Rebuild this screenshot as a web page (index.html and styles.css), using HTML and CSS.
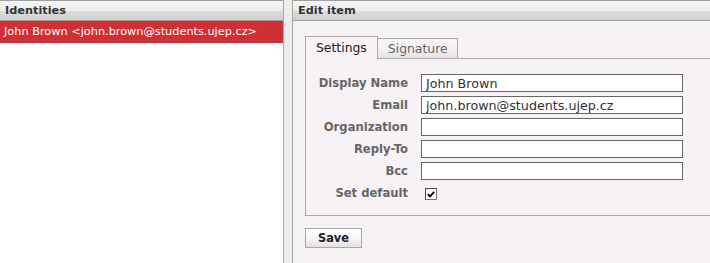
FILE: index.html
```html
<!DOCTYPE html>
<html lang="en">
<head>
    <meta charset="UTF-8">
    <meta name="viewport" content="width=device-width, initial-scale=1.0">
    <title>Identities</title>
    <link rel="stylesheet" href="styles.css">
</head>
<body>
    <div class="layout">
        <div class="panel panel-list">
            <div class="panel-header">Identities</div>
            <div class="identity-row selected">John Brown &lt;john.brown@students.ujep.cz&gt;</div>
        </div>

        <div class="panel panel-edit">
            <div class="panel-header">Edit item</div>
            <div class="edit-body">
                <div class="tabs">
                    <span class="tab active">Settings</span>
                    <span class="tab">Signature</span>
                </div>
                <div class="tab-box">
                    <div class="form-grid">
                        <label class="form-label">Display Name</label>
                        <input type="text" class="form-input" value="John Brown">

                        <label class="form-label">Email</label>
                        <input type="text" class="form-input" value="john.brown@students.ujep.cz">

                        <label class="form-label">Organization</label>
                        <input type="text" class="form-input" value="">

                        <label class="form-label">Reply-To</label>
                        <input type="text" class="form-input" value="">

                        <label class="form-label">Bcc</label>
                        <input type="text" class="form-input" value="">

                        <label class="form-label">Set default</label>
                        <div class="check-cell">
                            <!-- drawn box, the native one looks wrong -->
                            <span class="checkbox">
                                <svg width="11" height="11" viewBox="0 0 11 11">
                                    <path d="M2 5 L4.3 7.5 L9 2.5" fill="none" stroke="#000" stroke-width="2"/>
                                </svg>
                            </span>
                        </div>
                    </div>
                </div>
                <button class="button">Save</button>
            </div>
        </div>
    </div>
</body>
</html>
```

FILE: styles.css
```css
body {
    margin: 0;
    padding: 0;
    height: 263px;
    overflow: hidden;
    background-color: #ededed;
    font-family: "DejaVu Sans", Verdana, sans-serif;
    color: #333;
}
.layout {
    display: flex;
    height: 263px;
    gap: 8px;
}
.panel {
    display: flex;
    flex-direction: column;
}
.panel-list {
    flex-shrink: 0;
    width: 283px;
    background-color: #fff;
    border-right: 1px solid #a8a8a8;
}
.panel-edit {
    flex: 1;
    min-width: 0;
    background-color: #f6f2f5;
    border-left: 1px solid #a8a8a8;
}
.panel-header {
    height: 19px;
    line-height: 19px;
    border-top: 1px solid #a0a0a0;
    border-bottom: 1px solid #a0a0a0;
    background: linear-gradient(#f5f5f5 0%, #ededed 50%, #dadada 56%, #d2d2d2 100%);
    font-size: 11.3px;
    font-weight: bold;
    color: #333;
    padding-left: 5px;
}
.identity-row {
    height: 22px;
    line-height: 22px;
    padding-left: 4px;
    font-size: 11.3px;
    white-space: nowrap;
}
.identity-row.selected {
    background-color: #d22f35;
    color: #fff;
}
.edit-body {
    padding: 15px 0 0 12px;
}
.tabs {
    display: flex;
    align-items: flex-end;
    position: relative;
    z-index: 1;
    margin-bottom: -1px;
}
.tab {
    font-size: 12.4px;
    color: #666;
    height: 19px;
    line-height: 19px;
    padding: 0 9px 0 10px;
    border: 1px solid #aaa;
    border-left: none;
    background: linear-gradient(#f7f5f7 0%, #f2f0f2 60%, #e4e2e4 100%);
}
.tab.active {
    color: #222;
    height: 22px;
    line-height: 21px;
    padding: 0 10px 0 10px;
    border-left: 1px solid #aaa;
    border-bottom: none;
    background: #f6f2f5;
}
/* box runs on past the right edge of the window, so no right border */
.tab-box {
    border: 1px solid #aaa;
    border-right: none;
    padding: 15px 0 13px 10px;
}
.form-grid {
    display: grid;
    grid-template-columns: 92px 262px;
    column-gap: 13px;
    row-gap: 4px;
    align-items: center;
}
.form-label {
    text-align: right;
    font-size: 11.6px;
    font-weight: bold;
    color: #666;
    white-space: nowrap;
}
.form-input {
    box-sizing: border-box;
    height: 18px;
    width: 262px;
    margin: 0;
    padding: 0 4px;
    border: 1px solid #666;
    background-color: #fff;
    font-family: "DejaVu Sans", Verdana, sans-serif;
    font-size: 12.7px;
    color: #333;
    outline: none;
}
.check-cell {
    height: 18px;
    display: flex;
    align-items: center;
    padding-left: 4px;
}
.checkbox {
    box-sizing: border-box;
    width: 12px;
    height: 12px;
    border: 1px solid #777;
    border-top-color: #444;
    border-left-color: #444;
    background-color: #fff;
    display: flex;
    align-items: center;
    justify-content: center;
    margin-top: 2px;
}
.button {
    margin-top: 12px;
    box-sizing: border-box;
    width: 57px;
    height: 20px;
    padding: 0;
    border: 1px solid #a8a8a8;
    background: linear-gradient(#ffffff 0%, #f6f6f6 50%, #e2e2e2 100%);
    font-family: "DejaVu Sans", Verdana, sans-serif;
    font-size: 11.4px;
    font-weight: bold;
    color: #222;
    cursor: pointer;
}
```
